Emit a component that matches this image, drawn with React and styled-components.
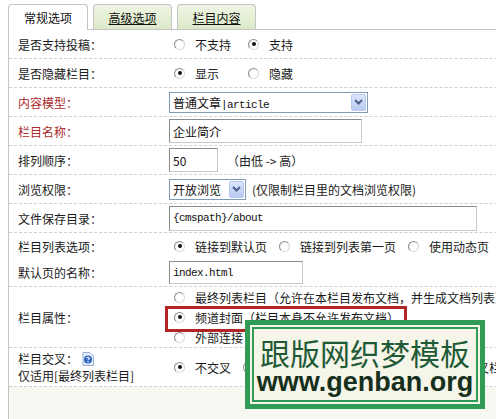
import React from "react";
import styled, { createGlobalStyle, css } from "styled-components";

const Global = createGlobalStyle`
  html, body { margin: 0; padding: 0; overflow: hidden; background: #fff; }
  body { font-family: "Noto Sans CJK SC", "Noto Sans", sans-serif; font-size: 12px; color: #1a1a1a; }
`;

const Page = styled.div`
  position: relative;
  margin-left: 8px;
  width: 820px;
  height: 419px;
`;

const TabBar = styled.div`
  display: flex;
  align-items: flex-end;
  gap: 5px;
  height: 29px;
  border-bottom: 1px solid #c4c4c4;
`;

const Tab = styled.div`
  box-sizing: border-box;
  width: ${(p) => p.$w}px;
  height: 25px;
  display: flex;
  align-items: center;
  justify-content: center;
  border: 1px solid #c4c4c4;
  border-bottom: none;
  border-radius: 4px 4px 0 0;
  font-size: 12px;
  color: #111;
  ${(p) =>
    p.$active
      ? css`
          background: #fff;
          height: 26px;
          margin-bottom: -1px;
        `
      : css`
          background: linear-gradient(#eef5e3, #dce9c8);
          text-decoration: underline;
        `}
`;

const Form = styled.div`
  border-left: 1px solid #c4c4c4;
`;

const Row = styled.div`
  display: grid;
  grid-template-columns: 160px 1fr;
  align-items: center;
  height: ${(p) => p.$h}px;
  border-bottom: ${(p) => (p.$divider ? "1px dashed #cfcfcf" : "none")};
`;

const Label = styled.div`
  padding-left: 9px;
  color: ${(p) => (p.$red ? "#a82b2b" : "#1a1a1a")};
  line-height: 17px;
  white-space: nowrap;
  display: flex;
  flex-direction: column;
`;

const LabelLine = styled.span`
  display: inline-flex;
  align-items: center;
  gap: 4px;
`;

const Value = styled.div`
  display: flex;
  align-items: center;
  gap: ${(p) => p.$gap ?? 10}px;
  white-space: nowrap;
`;

const Radios = styled.div`
  display: flex;
  flex-direction: ${(p) => (p.$column ? "column" : "row")};
  align-items: ${(p) => (p.$column ? "flex-start" : "center")};
  gap: ${(p) => p.$gap ?? 0}px;
  padding-left: 5px;
  white-space: nowrap;
`;

const RadioItem = styled.span`
  position: relative;
  display: inline-flex;
  align-items: center;
  gap: 10px;
  min-width: ${(p) => p.$w || 0}px;
  height: ${(p) => p.$h || 20}px;
`;

const Circle = styled.span`
  box-sizing: border-box;
  width: 11px;
  height: 11px;
  border-radius: 50%;
  border: 1px solid;
  border-color: #8e8e8e #d4d4d4 #dcdcdc #8e8e8e;
  background: radial-gradient(circle at 60% 60%, #fff 40%, #ececec 100%);
  display: inline-flex;
  align-items: center;
  justify-content: center;
  flex: none;
  &::after {
    content: "";
    width: 4px;
    height: 4px;
    border-radius: 50%;
    background: ${(p) => (p.$checked ? "#111" : "transparent")};
  }
`;

const Highlight = styled.span`
  position: absolute;
  left: -9px;
  top: -1px;
  width: 242px;
  height: 26px;
  box-sizing: border-box;
  border: 3px solid #b02626;
  pointer-events: none;
`;

const Input = styled.div`
  box-sizing: border-box;
  width: ${(p) => p.$w}px;
  height: ${(p) => p.$h || 24}px;
  border: 1px solid;
  border-color: #8c8c8c #c9c9c9 #c9c9c9 #8c8c8c;
  padding-left: 3px;
  display: flex;
  align-items: center;
  font-size: ${(p) => (p.$mono ? "11px" : "12px")};
  font-family: ${(p) =>
    p.$mono ? '"Liberation Mono", monospace' : '"Noto Sans CJK SC", sans-serif'};
  letter-spacing: ${(p) => (p.$mono ? "-0.6px" : "0")};
  color: #111;
`;

const Select = styled.div`
  box-sizing: border-box;
  width: ${(p) => p.$w}px;
  height: 21px;
  border: 1px solid #7f9db9;
  padding-left: 3px;
  display: flex;
  align-items: center;
  color: #111;
`;

const Mono = styled.span`
  font-family: "Liberation Mono", monospace;
  font-size: 11px;
  letter-spacing: -0.6px;
`;

const ArrowBtn = styled.span`
  box-sizing: border-box;
  margin-left: auto;
  margin-right: 1px;
  width: 15px;
  height: 17px;
  border: 1px solid #b9c8ee;
  border-radius: 2px;
  background: linear-gradient(#dbe5fc, #b8c9f2);
  display: flex;
  align-items: center;
  justify-content: center;
`;

const Note = styled.span`
  color: #1a1a1a;
`;

const Footer = styled.div`
  height: 32px;
  background: #f8f8f3;
`;

const Watermark = styled.div`
  position: absolute;
  left: 237px;
  top: 320px;
  width: 240px;
  height: 89px;
  box-sizing: border-box;
  border: 5px solid #2f9b55;
  box-shadow: inset 0 0 0 2px #f5f5e9, inset 0 0 0 4px #2f9b55;
  background: #f5f5e9;
  display: flex;
  flex-direction: column;
  align-items: center;
  padding-top: 12px;
`;

const WmTitle = styled.div`
  font-family: "Noto Sans CJK SC", sans-serif;
  font-size: 30px;
  line-height: 30px;
  color: #1f5a36;
  letter-spacing: 0px;
`;

const WmUrl = styled.div`
  font-family: "Liberation Sans", Arial, sans-serif;
  font-weight: bold;
  font-size: 27px;
  line-height: 30px;
  color: #16301d;
`;

const Chevron = () => (
  <svg width="9" height="6" viewBox="0 0 9 6">
    <path d="M1 1 L4.5 4.5 L8 1" fill="none" stroke="#4b5f8a" strokeWidth="2" />
  </svg>
);

const HelpIcon = () => (
  <svg width="12" height="14" viewBox="0 0 12 14">
    <path d="M1 0.5 H8 L11.5 4 V13.5 H1 Z" fill="#e6eefb" stroke="#9ab0d6" />
    <circle cx="6" cy="7.5" r="4" fill="#2f63c0" />
    <path d="M4.6 6.3 C4.6 4.9 7.4 4.9 7.4 6.3 C7.4 7.1 6 7.2 6 8.3" fill="none" stroke="#fff" strokeWidth="1.1" />
    <circle cx="6" cy="9.8" r="0.7" fill="#fff" />
  </svg>
);

const Radio = ({ checked, children, w, highlight }) => (
  <RadioItem $w={w}>
    <Circle $checked={checked} />
    <span>{children}</span>
    {highlight && <Highlight />}
  </RadioItem>
);

export default function App() {
  return (
    <>
      <Global />
      <Page>
        <TabBar>
          <Tab $w={80} $active>常规选项</Tab>
          <Tab $w={79}>高级选项</Tab>
          <Tab $w={79}>栏目内容</Tab>
        </TabBar>
        <Form>
          <Row $h={28} $divider>
            <Label>是否支持投稿：</Label>
            <Radios>
              <Radio w={74}>不支持</Radio>
              <Radio checked>支持</Radio>
            </Radios>
          </Row>
          <Row $h={28} $divider>
            <Label>是否隐藏栏目：</Label>
            <Radios>
              <Radio w={74} checked>显示</Radio>
              <Radio>隐藏</Radio>
            </Radios>
          </Row>
          <Row $h={28} $divider>
            <Label $red>内容模型：</Label>
            <Value>
              <Select $w={199}>
                <span>
                  普通文章<Mono>|article</Mono>
                </span>
                <ArrowBtn>
                  <Chevron />
                </ArrowBtn>
              </Select>
            </Value>
          </Row>
          <Row $h={28} $divider>
            <Label $red>栏目名称：</Label>
            <Value>
              <Input $w={193}>企业简介</Input>
            </Value>
          </Row>
          <Row $h={28} $divider>
            <Label>排列顺序：</Label>
            <Value $gap={9}>
              <Input $w={49}>50</Input>
              <Note>（由低 -&gt; 高）</Note>
            </Value>
          </Row>
          <Row $h={28} $divider>
            <Label>浏览权限：</Label>
            <Value $gap={6}>
              <Select $w={77}>
                <span>开放浏览</span>
                <ArrowBtn>
                  <Chevron />
                </ArrowBtn>
              </Select>
              <Note>(仅限制栏目里的文档浏览权限)</Note>
            </Value>
          </Row>
          <Row $h={28} $divider>
            <Label>文件保存目录：</Label>
            <Value>
              <Input $w={308} $h={25} $mono>{"{cmspath}/about"}</Input>
            </Value>
          </Row>
          <Row $h={26}>
            <Label>栏目列表选项：</Label>
            <Radios $gap={12}>
              <Radio checked>链接到默认页</Radio>
              <Radio>链接到列表第一页</Radio>
              <Radio>使用动态页</Radio>
            </Radios>
          </Row>
          <Row $h={27} $divider>
            <Label>默认页的名称：</Label>
            <Value>
              <Input $w={134} $h={23} $mono>index.html</Input>
            </Value>
          </Row>
          <Row $h={60} $divider>
            <Label>栏目属性：</Label>
            <Radios $column $gap={0}>
              <Radio>最终列表栏目（允许在本栏目发布文档，并生成文档列表）</Radio>
              <Radio checked highlight>频道封面（栏目本身不允许发布文档）</Radio>
              <Radio>外部连接（在"栏目目录"处填写网址）</Radio>
            </Radios>
          </Row>
          <Row $h={38} $divider>
            <Label>
              <LabelLine>
                栏目交叉：<HelpIcon />
              </LabelLine>
              <LabelLine>仅适用[最终列表栏目]</LabelLine>
            </Label>
            <Radios $gap={12}>
              <Radio checked>不交叉</Radio>
              <Radio>自动获取同名栏目内容</Radio>
              <Radio>手工指定交叉栏目ID(用逗号分开)</Radio>
            </Radios>
          </Row>
          <Footer />
        </Form>
        <Watermark>
          <WmTitle>跟版网织梦模板</WmTitle>
          <WmUrl>www.genban.org</WmUrl>
        </Watermark>
      </Page>
    </>
  );
}
